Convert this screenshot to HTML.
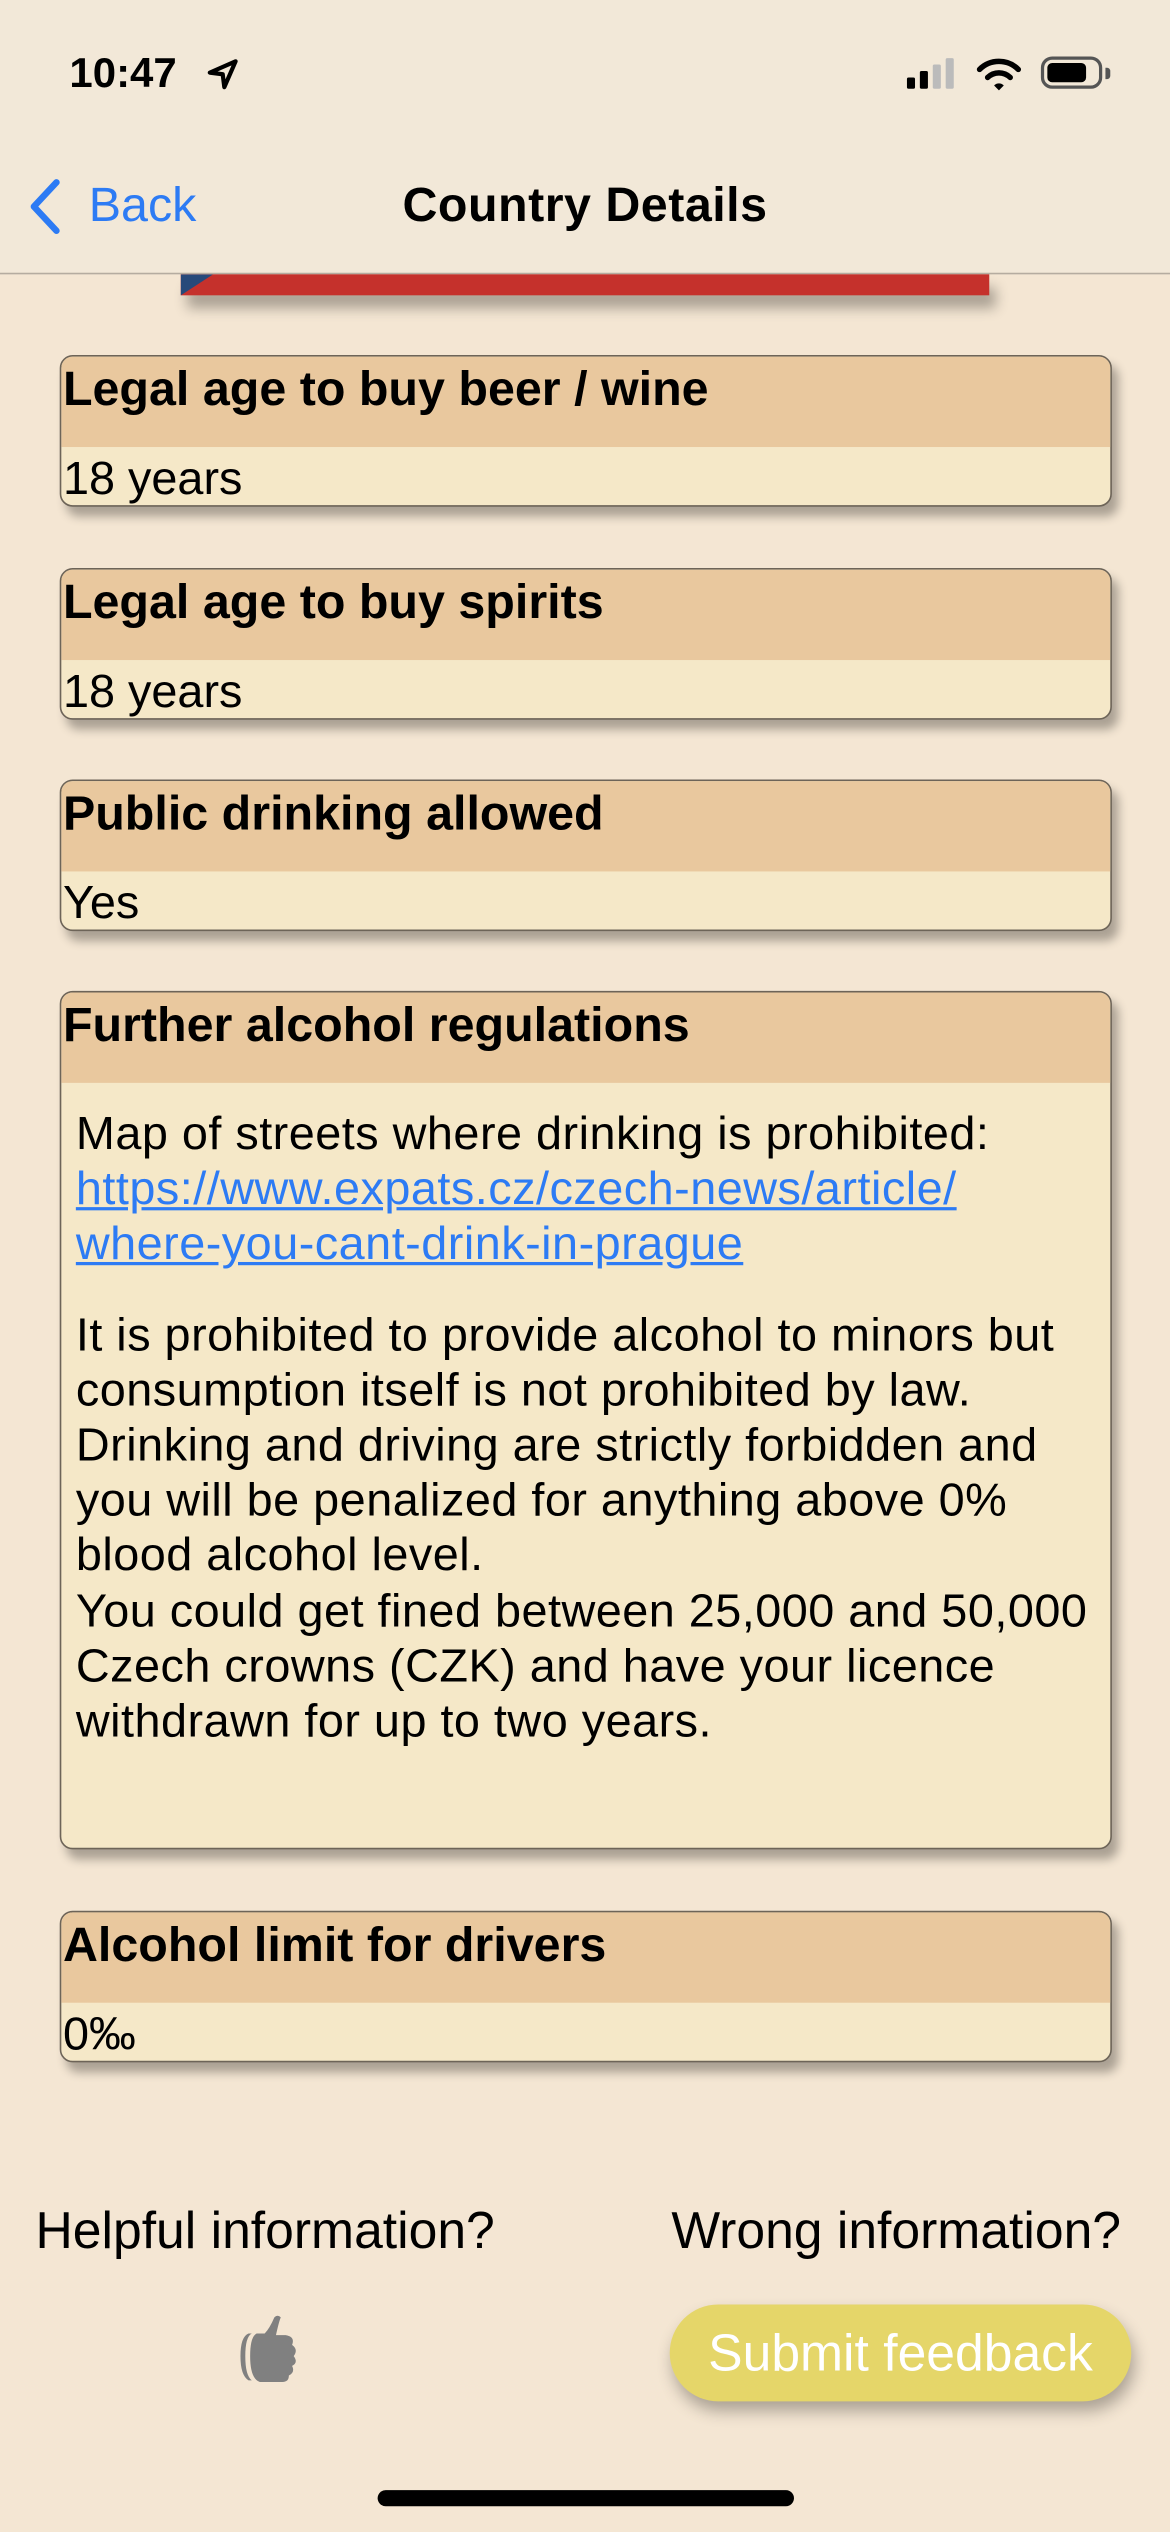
<!DOCTYPE html>
<html><head><meta charset="utf-8"><style>
html,body{margin:0;padding:0;}
body{width:1170px;height:2532px;overflow:hidden;background:#f4e6d3;font-family:"Liberation Sans",sans-serif;}
#w{position:absolute;left:0;top:0;width:725px;height:1569px;transform:scale(1.61379);transform-origin:0 0;}
.a{position:absolute;white-space:nowrap;}
.hdr{left:0;top:0;width:725px;height:169px;background:#f2e8d8;border-bottom:1px solid #b5aca0;}
.card{position:absolute;left:37px;width:650px;border:1px solid #6d6458;border-radius:8px;overflow:hidden;background:#f5e8c8;box-shadow:4px 6px 6px rgba(0,0,0,0.3);}
.ch{background:#e9c89e;height:56px;font-size:30px;font-weight:bold;color:#000;line-height:42px;padding-left:1px;white-space:nowrap;}
.cb{font-size:29px;line-height:40px;padding-left:1px;color:#000;}
.p{font-size:29px;letter-spacing:0.3px;line-height:34.2px;padding:15px 0 0 9px;color:#000;white-space:nowrap;}
a{color:#2d7bf4;text-decoration:underline;}
</style></head><body><div id="w">
<div class="a hdr"></div>
<div class="a" style="left:43px;top:30px;font-size:26px;font-weight:bold;">10:47</div>
<svg class="a" style="left:127px;top:35px" width="22" height="22" viewBox="0 0 22 22"><path d="M3 10 L19 3 L12 19 L11 11 Z" fill="none" stroke="#000" stroke-width="2.6" stroke-linejoin="round"/></svg>
<div class="a" style="left:562px;top:48px;width:5px;height:7px;background:#000;border-radius:1px"></div>
<div class="a" style="left:570px;top:44px;width:5px;height:11px;background:#000;border-radius:1px"></div>
<div class="a" style="left:578px;top:40px;width:5px;height:15px;background:#bbb;border-radius:1px"></div>
<div class="a" style="left:586px;top:36px;width:5px;height:19px;background:#bbb;border-radius:1px"></div>
<svg class="a" style="left:605px;top:35px" width="28" height="22" viewBox="0 0 28 22"><path d="M2 8 A17 17 0 0 1 26 8" fill="none" stroke="#000" stroke-width="3.4" stroke-linecap="round"/><path d="M7 13 A10 10 0 0 1 21 13" fill="none" stroke="#000" stroke-width="3.4" stroke-linecap="round"/><path d="M11 18 L14 21 L17 18 A4 4 0 0 0 11 18Z" fill="#000"/></svg>
<div class="a" style="left:645px;top:35px;width:38px;height:20px;border:2px solid #555;border-radius:7px;box-sizing:border-box"></div>
<div class="a" style="left:649px;top:39px;width:24px;height:12px;background:#000;border-radius:3px"></div>
<div class="a" style="left:685px;top:42px;width:3px;height:7px;background:#555;border-radius:0 2px 2px 0"></div>
<svg class="a" style="left:16px;top:110px" width="24" height="38" viewBox="0 0 24 38"><path d="M19 3 L5 18 L19 33" fill="none" stroke="#2d7bf4" stroke-width="4" stroke-linecap="round" stroke-linejoin="round"/></svg>
<div class="a" style="left:55px;top:111px;font-size:30px;color:#2d7bf4">Back</div>
<div class="a" style="left:0;width:725px;top:111px;text-align:center;font-size:30px;font-weight:bold;letter-spacing:0.3px">Country Details</div>
<div class="a" style="left:112px;top:170px;width:501px;height:13px;background:#c5312c;box-shadow:4px 8px 8px rgba(0,0,0,0.3)"></div>
<svg class="a" style="left:112px;top:170px" width="20" height="13"><path d="M0 0 L20 0 L0 13Z" fill="#27497a"/></svg>

<div class="card" style="top:220px;height:92px"><div class="ch">Legal age to buy beer / wine</div><div class="cb">18 years</div></div>
<div class="card" style="top:352px;height:92px"><div class="ch">Legal age to buy spirits</div><div class="cb">18 years</div></div>
<div class="card" style="top:483px;height:92px"><div class="ch">Public drinking allowed</div><div class="cb">Yes</div></div>
<div class="card" style="top:614px;height:530px"><div class="ch">Further alcohol regulations</div>
<div class="p">Map of streets where drinking is prohibited:<br><a>https://www.expats.cz/czech-news/article/<br>where-you-cant-drink-in-prague</a></div>
<div class="p" style="padding-top:22px">It is prohibited to provide alcohol to minors but<br>consumption itself is not prohibited by law.<br>Drinking and driving are strictly forbidden and<br>you will be penalized for anything above 0%<br>blood alcohol level.<br>You could get fined between 25,000 and 50,000<br>Czech crowns (CZK) and have your licence<br>withdrawn for up to two years.</div></div>
<div class="card" style="top:1184px;height:92px"><div class="ch">Alcohol limit for drivers</div><div class="cb">0‰</div></div>

<div class="a" style="left:22px;top:1364px;font-size:32px;">Helpful information?</div>
<div class="a" style="left:416px;top:1364px;font-size:32px;">Wrong information?</div>
<svg class="a" style="left:145px;top:1434px" width="46" height="46" viewBox="0 0 46 46"><path d="M9 12 Q4 14 4 26 Q4 38 9 41 L11 41 Q7 38 7 26 Q7 14 11 12Z" fill="#808080"/><path d="M14 12 Q10 14 10 26 Q10 40 16 42 L30 42 Q34 42 34 38 Q38 36 36 32 Q40 30 37 26 Q40 22 36 19 Q38 14 32 13 L26 13 Q28 4 29 2 Q27 0 25 2 Q22 9 19 12Z" fill="#808080"/></svg>
<div class="a" style="left:415px;top:1428px;width:286px;height:60px;border-radius:30px;background:#e5d669;box-shadow:2px 6px 10px rgba(0,0,0,0.3);color:#fff;font-size:32px;line-height:60px;text-align:center">Submit feedback</div>
<div class="a" style="left:234px;top:1543px;width:258px;height:10px;border-radius:5px;background:#000"></div>
</div></body></html>
